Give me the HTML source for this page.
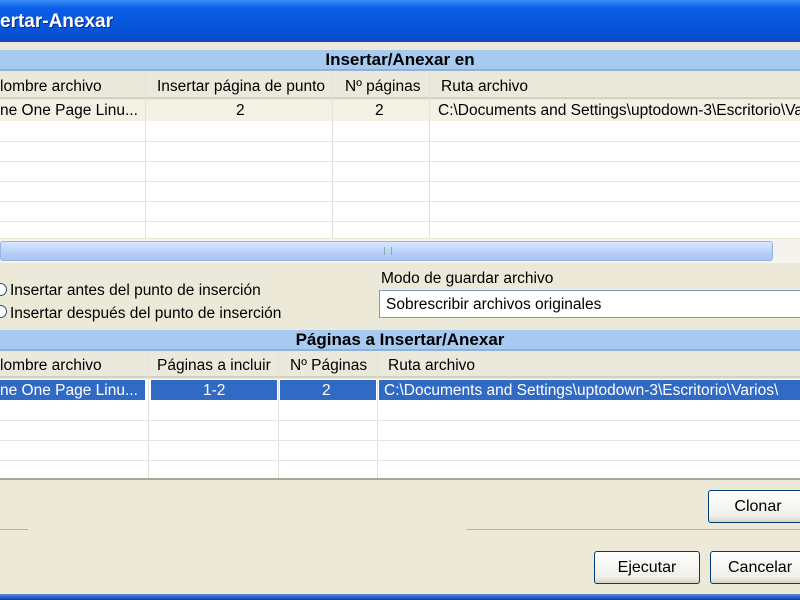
<!DOCTYPE html>
<html><head><meta charset="utf-8"><style>
*{margin:0;padding:0;box-sizing:border-box}
body{width:800px;height:600px;overflow:hidden;background:#ece9d8;font-family:"Liberation Sans",sans-serif;font-size:15.5px;color:#000;position:relative}
.a{position:absolute;white-space:nowrap}
.title{left:0;top:0;width:800px;height:42px;background:linear-gradient(#3a8cf5,#0a5ee8 20%,#0654d8 70%,#0a48c0);}
.hdr{left:0;width:800px;height:21px;background:#a6caf0;border-bottom:2px solid #8fb0d8;font-weight:bold;text-align:center;line-height:20px;font-size:17px}
.ch{background:#ebe8dc;height:26px;width:800px;left:0;border-bottom:2px solid #d6d2c2}
.vl{width:1px;background:#e2e0d8}
.hl{height:1px;left:0;width:800px;background:#e6e4dc}
.btn{border:1px solid #003c74;border-radius:3px;background:linear-gradient(#fff,#f0efe8 80%,#d8d4c4);text-align:center;font-size:16px}
</style></head><body>
<div class="a title"></div>
<div class="a" style="left:0;top:11px;color:#fff;font-weight:bold;font-size:19px;text-shadow:1px 1px #0a2a80">ertar-Anexar</div>
<div class="a hdr" style="top:50px">Insertar/Anexar en</div>
<div class="a ch" style="top:73px"></div>
<div class="a" style="left:0;top:78px">lombre archivo</div>
<div class="a" style="left:157px;top:78px">Insertar página de punto</div>
<div class="a" style="left:345px;top:78px">Nº páginas</div>
<div class="a" style="left:441px;top:78px">Ruta archivo</div>
<div class="a" style="left:0;top:100px;width:800px;height:138px;background:#fff"></div>
<div class="a" style="left:0;top:100px;width:800px;height:21px;background:#f3f0e4"></div>
<div class="a" style="left:0;top:102px">ne One Page Linu...</div>
<div class="a" style="left:236px;top:102px">2</div>
<div class="a" style="left:375px;top:102px">2</div>
<div class="a" style="left:438px;top:102px">C:\Documents and Settings\uptodown-3\Escritorio\Va</div>
<div class="a vl" style="left:145px;top:73px;height:165px"></div>
<div class="a vl" style="left:332px;top:73px;height:165px"></div>
<div class="a vl" style="left:429px;top:73px;height:165px"></div>
<div class="a hl" style="top:141px"></div><div class="a hl" style="top:161px"></div><div class="a hl" style="top:181px"></div><div class="a hl" style="top:201px"></div><div class="a hl" style="top:221px"></div>
<div class="a" style="left:0;top:239px;width:800px;height:24px;background:#f4f3ee"></div>
<div class="a" style="left:0;top:241px;width:773px;height:20px;background:linear-gradient(#d8e6fc,#b8d0f8 60%,#a8c4f4);border:1px solid #98b4e4;border-radius:3px"></div>
<div class="a" style="left:384px;top:247px;width:8px;height:8px;border-left:1px solid #8aa;border-right:1px solid #8aa"></div>
<div class="a" style="left:-6px;top:283px;width:13px;height:13px;border:1px solid #1c5180;border-radius:50%;background:#fff"></div>
<div class="a" style="left:-6px;top:305px;width:13px;height:13px;border:1px solid #1c5180;border-radius:50%;background:#fff"></div>
<div class="a" style="left:10px;top:282px">Insertar antes del punto de inserción</div>
<div class="a" style="left:10px;top:305px">Insertar después del punto de inserción</div>
<div class="a" style="left:381px;top:270px">Modo de guardar archivo</div>
<div class="a" style="left:379px;top:290px;width:430px;height:28px;background:#fff;border:1px solid #7f9db9"></div>
<div class="a" style="left:386px;top:296px">Sobrescribir archivos originales</div>
<div class="a hdr" style="top:330px">Páginas a Insertar/Anexar</div>
<div class="a ch" style="top:352px"></div>
<div class="a" style="left:0;top:357px">lombre archivo</div>
<div class="a" style="left:157px;top:357px">Páginas a incluir</div>
<div class="a" style="left:290px;top:357px">Nº Páginas</div>
<div class="a" style="left:388px;top:357px">Ruta archivo</div>
<div class="a" style="left:0;top:379px;width:800px;height:100px;background:#fff"></div>
<div class="a vl" style="left:148px;top:352px;height:127px"></div>
<div class="a vl" style="left:278px;top:352px;height:127px"></div>
<div class="a vl" style="left:377px;top:352px;height:127px"></div>
<div class="a" style="left:0;top:380px;width:145px;height:20px;background:#316ac5"></div>
<div class="a" style="left:151px;top:380px;width:126px;height:20px;background:#316ac5"></div>
<div class="a" style="left:280px;top:380px;width:96px;height:20px;background:#316ac5"></div>
<div class="a" style="left:379px;top:380px;width:421px;height:20px;background:#316ac5"></div>
<div class="a" style="left:0;top:382px;color:#fff">ne One Page Linu...</div>
<div class="a" style="left:203px;top:382px;color:#fff">1-2</div>
<div class="a" style="left:322px;top:382px;color:#fff">2</div>
<div class="a" style="left:384px;top:382px;color:#fff">C:\Documents and Settings\uptodown-3\Escritorio\Varios\</div>
<div class="a hl" style="top:420px"></div><div class="a hl" style="top:440px"></div><div class="a hl" style="top:460px"></div>
<div class="a" style="left:0;top:478px;width:800px;height:2px;background:#a8a698"></div>
<div class="a btn" style="left:708px;top:490px;width:100px;height:33px;line-height:31px">Clonar</div>
<div class="a" style="left:0;top:529px;width:28px;height:1px;background:#b8b4a4"></div>
<div class="a" style="left:466px;top:529px;width:340px;height:1px;background:#b8b4a4"></div>
<div class="a btn" style="left:594px;top:551px;width:106px;height:33px;line-height:31px">Ejecutar</div>
<div class="a btn" style="left:710px;top:551px;width:100px;height:33px;line-height:31px">Cancelar</div>
<div class="a" style="left:0;top:594px;width:800px;height:6px;background:linear-gradient(#5a8de0,#0a3ca8)"></div>
</body></html>
